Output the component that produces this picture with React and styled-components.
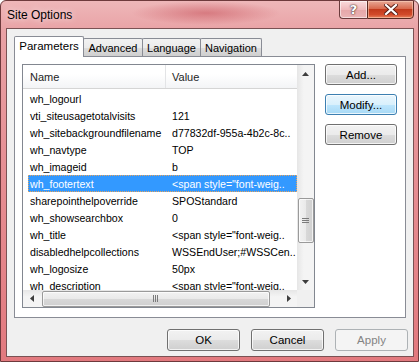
import React from "react";
import styled, { createGlobalStyle } from "styled-components";

const GlobalStyle = createGlobalStyle`
  html, body {
    margin: 0;
    padding: 0;
    background: #ffffff;
  }
  body {
    font-family: "Liberation Sans", Arial, sans-serif;
  }
`;

const rows = [
  ["wh_logourl", ""],
  ["vti_siteusagetotalvisits", "121"],
  ["wh_sitebackgroundfilename", "d77832df-955a-4b2c-8c.."],
  ["wh_navtype", "TOP"],
  ["wh_imageid", "b"],
  ["wh_footertext", '<span style="font-weig..'],
  ["sharepointhelpoverride", "SPOStandard"],
  ["wh_showsearchbox", "0"],
  ["wh_title", '<span style="font-weig..'],
  ["disabledhelpcollections", "WSSEndUser;#WSSCen.."],
  ["wh_logosize", "50px"],
  ["wh_description", '<span style="font-weig..'],
];

const tabs = [
  { label: "Parameters", w: 70 },
  { label: "Advanced", w: 60 },
  { label: "Language", w: 59 },
  { label: "Navigation", w: 62 },
];

function App() {
  return (
    <>
      <GlobalStyle />
      <Window>
        <Glow />
        <TitleBar>
          <Title>Site Options</Title>
          <Caption>
            <HelpButton>?</HelpButton>
            <CloseButton>
              <svg width="14" height="11" viewBox="0 0 14 11">
                <path
                  d="M2 1 L12 10 M12 1 L2 10"
                  stroke="#5a2018"
                  strokeWidth="4"
                  strokeLinecap="square"
                />
                <path
                  d="M2 1 L12 10 M12 1 L2 10"
                  stroke="#ffffff"
                  strokeWidth="2.2"
                  strokeLinecap="square"
                />
              </svg>
            </CloseButton>
          </Caption>
        </TitleBar>
        <Client>
          <TabStrip>
            {tabs.map((t, i) => (
              <Tab key={t.label} $w={t.w} $selected={i === 0}>
                {t.label}
              </Tab>
            ))}
          </TabStrip>
          <Panel>
            <ListView>
              <ListMain>
                <Header>
                  <HeaderCell $w={143}>Name</HeaderCell>
                  <HeaderCell>Value</HeaderCell>
                </Header>
                <Body>
                  {rows.map(([name, value]) => (
                    <Row key={name} $selected={name === "wh_footertext"}>
                      <NameCell>{name}</NameCell>
                      <ValueCell>{value}</ValueCell>
                    </Row>
                  ))}
                </Body>
              </ListMain>
              <VScroll>
                <Arrow>
                  <svg width="7" height="4" viewBox="0 0 7 4">
                    <path d="M0 4 L3.5 0 L7 4 Z" fill="#3d3d3d" />
                  </svg>
                </Arrow>
                <VTrack>
                  <VThumb>
                    <svg width="7" height="6" viewBox="0 0 7 6">
                      <path d="M0 0.5 H7 M0 2.5 H7 M0 4.5 H7" stroke="#7a7a7a" />
                    </svg>
                  </VThumb>
                </VTrack>
                <Arrow>
                  <svg width="7" height="4" viewBox="0 0 7 4">
                    <path d="M0 0 L3.5 4 L7 0 Z" fill="#3d3d3d" />
                  </svg>
                </Arrow>
              </VScroll>
              <HScroll>
                <Arrow>
                  <svg width="4" height="7" viewBox="0 0 4 7">
                    <path d="M4 0 L0 3.5 L4 7 Z" fill="#3d3d3d" />
                  </svg>
                </Arrow>
                <HTrack>
                  <HThumb>
                    <svg width="6" height="7" viewBox="0 0 6 7">
                      <path d="M0.5 0 V7 M2.5 0 V7 M4.5 0 V7" stroke="#7a7a7a" />
                    </svg>
                  </HThumb>
                </HTrack>
                <Arrow>
                  <svg width="4" height="7" viewBox="0 0 4 7">
                    <path d="M0 0 L4 3.5 L0 7 Z" fill="#3d3d3d" />
                  </svg>
                </Arrow>
              </HScroll>
              <Corner />
            </ListView>
            <SideButtons>
              <Button>Add...</Button>
              <Button $focused>Modify...</Button>
              <Button>Remove</Button>
            </SideButtons>
          </Panel>
          <Footer>
            <Button $wide>OK</Button>
            <Button $wide>Cancel</Button>
            <Button $wide disabled>
              Apply
            </Button>
          </Footer>
        </Client>
      </Window>
    </>
  );
}

export default App;

const Window = styled.div`
  position: relative;
  width: 419px;
  height: 362px;
  box-sizing: border-box;
  overflow: hidden;
  display: flex;
  flex-direction: column;
  border: 1px solid #6e3a3c;
  border-radius: 6px 6px 0 0;
  background: linear-gradient(
    180deg,
    #eeb7b9 0px,
    #e9a2a5 30px,
    #e69196 150px,
    #e2797e 362px
  );
`;

const Glow = styled.div`
  position: absolute;
  left: 130px;
  top: 0;
  width: 150px;
  height: 24px;
  background: radial-gradient(
    ellipse at center,
    rgba(190, 60, 70, 0.45) 0%,
    rgba(190, 60, 70, 0) 70%
  );
  pointer-events: none;
`;

const TitleBar = styled.div`
  position: relative;
  height: 27px;
  display: flex;
  align-items: flex-start;
  padding-left: 6px;
`;

const Title = styled.div`
  font-family: "Liberation Sans", Arial, sans-serif;
  font-size: 12px;
  color: #000;
  line-height: 12px;
  margin-top: 8px;
  text-shadow: 0 0 6px rgba(255, 255, 255, 0.9);
`;

const Caption = styled.div`
  margin-left: auto;
  margin-right: 4px;
  margin-top: -1px;
  display: flex;
`;

const HelpButton = styled.div`
  width: 28px;
  height: 19px;
  box-sizing: border-box;
  border: 1px solid #6a3b3c;
  border-right: none;
  border-radius: 0 0 0 4px;
  background: linear-gradient(
    180deg,
    rgba(255, 235, 235, 0.7) 0%,
    rgba(240, 190, 192, 0.6) 50%,
    rgba(225, 160, 162, 0.6) 51%,
    rgba(235, 185, 185, 0.7) 100%
  );
  box-shadow: inset 0 0 0 1px rgba(255, 255, 255, 0.55);
  display: flex;
  align-items: center;
  justify-content: center;
  font-family: "DejaVu Sans", sans-serif;
  font-weight: bold;
  font-size: 13px;
  color: #fff;
  text-shadow: 0 0 2px #3a2020, 0 0 1px #3a2020;
`;

const CloseButton = styled.div`
  width: 47px;
  height: 19px;
  box-sizing: border-box;
  border: 1px solid #5a2a22;
  border-radius: 0 0 4px 0;
  background: linear-gradient(
    180deg,
    #e8a896 0%,
    #d86a4e 45%,
    #c23a1c 50%,
    #d24a2a 80%,
    #e8825e 100%
  );
  box-shadow: inset 0 0 0 1px rgba(255, 220, 200, 0.5);
  display: flex;
  align-items: center;
  justify-content: center;
`;

const Client = styled.div`
  position: relative;
  margin: 0 4px 0 5px;
  height: 329px;
  box-sizing: border-box;
  border: 1px solid #7a5254;
  background: #f0f0f0;
  display: flex;
  flex-direction: column;
  padding: 7px 7px 0 7px;
  font-family: "Liberation Sans", Arial, sans-serif;
  font-size: 11px;
  color: #000;
`;

const TabStrip = styled.div`
  position: relative;
  z-index: 1;
  display: flex;
  align-items: flex-end;
  height: 20px;
`;

const Tab = styled.div`
  box-sizing: border-box;
  width: ${(p) => p.$w}px;
  height: ${(p) => (p.$selected ? 21 : 18)}px;
  margin-bottom: ${(p) => (p.$selected ? -1 : 0)}px;
  margin-left: ${(p) => (p.$selected ? 0 : -1)}px;
  border: 1px solid #898c95;
  border-bottom: none;
  border-radius: 2px 2px 0 0;
  background: ${(p) =>
    p.$selected
      ? "#ffffff"
      : "linear-gradient(180deg, #f2f2f2 0%, #ebebeb 50%, #dddddd 51%, #cfcfcf 100%)"};
  display: flex;
  align-items: center;
  justify-content: center;
  padding-bottom: ${(p) => (p.$selected ? 3 : 0)}px;
  font-size: ${(p) => (p.$selected ? 11.5 : 11)}px;
  white-space: nowrap;
`;

const Panel = styled.div`
  box-sizing: border-box;
  width: 392px;
  height: 262px;
  border: 1px solid #898c95;
  background: #ffffff;
  display: flex;
  align-items: flex-start;
  padding: 7px 0 0 7px;
`;

const ListView = styled.div`
  box-sizing: border-box;
  width: 293px;
  height: 244px;
  border: 1px solid #828790;
  background: #ffffff;
  display: grid;
  grid-template-columns: 274px 17px;
  grid-template-rows: 225px 17px;
  font-size: 10.6px;
`;

const ListMain = styled.div`
  overflow: hidden;
  display: flex;
  flex-direction: column;
`;

const Header = styled.div`
  flex: none;
  height: 23px;
  display: flex;
  border-bottom: 1px solid #d5d5d5;
  background: linear-gradient(180deg, #ffffff 0%, #ffffff 40%, #f3f4f6 100%);
`;

const HeaderCell = styled.div`
  box-sizing: border-box;
  ${(p) => (p.$w ? `width: ${p.$w}px; border-right: 1px solid #e3e4e6;` : "flex: 1;")}
  padding-left: ${(p) => (p.$w ? 7 : 6)}px;
  display: flex;
  align-items: center;
  color: #1e1e1e;
  font-size: 11px;
`;

const Body = styled.div`
  padding-top: 1px;
  padding-left: 5px;
`;

const Row = styled.div`
  box-sizing: border-box;
  height: 17px;
  display: grid;
  grid-template-columns: 138px 1fr;
  align-items: center;
  white-space: nowrap;
  background: ${(p) => (p.$selected ? "#3399ff" : "transparent")};
  color: ${(p) => (p.$selected ? "#ffffff" : "#000000")};
  outline: ${(p) => (p.$selected ? "1px dotted #e9a45a" : "none")};
  outline-offset: -1px;
`;

const NameCell = styled.div`
  padding-left: 2px;
  overflow: hidden;
`;

const ValueCell = styled.div`
  padding-left: 6px;
  overflow: hidden;
`;

const VScroll = styled.div`
  display: flex;
  flex-direction: column;
  background: linear-gradient(90deg, #e6e6e6 0%, #f4f4f4 40%, #f4f4f4 100%);
`;

const HScroll = styled.div`
  display: flex;
  background: linear-gradient(180deg, #e6e6e6 0%, #f4f4f4 40%, #f4f4f4 100%);
`;

const Arrow = styled.div`
  flex: none;
  width: 17px;
  height: 17px;
  display: flex;
  align-items: center;
  justify-content: center;
`;

const VTrack = styled.div`
  flex: 1;
  display: flex;
  flex-direction: column;
  padding-top: 116px;
  padding-bottom: 30px;
  align-items: center;
`;

const VThumb = styled.div`
  box-sizing: border-box;
  width: 16px;
  flex: 1;
  border: 1px solid #9a9a9a;
  border-radius: 2px;
  background: linear-gradient(90deg, #f2f2f2 0%, #e9e9e9 50%, #d8d8d8 51%, #d0d0d0 100%);
  box-shadow: inset 0 0 0 1px rgba(255, 255, 255, 0.7);
  display: flex;
  align-items: center;
  justify-content: center;
`;

const HTrack = styled.div`
  flex: 1;
  display: flex;
  padding-left: 2px;
  padding-right: 10px;
  align-items: center;
`;

const HThumb = styled.div`
  box-sizing: border-box;
  height: 16px;
  flex: 1;
  border: 1px solid #9a9a9a;
  border-radius: 2px;
  background: linear-gradient(180deg, #f2f2f2 0%, #e9e9e9 50%, #d8d8d8 51%, #d0d0d0 100%);
  box-shadow: inset 0 0 0 1px rgba(255, 255, 255, 0.7);
  display: flex;
  align-items: center;
  justify-content: center;
`;

const Corner = styled.div`
  background: #f0f0f0;
`;

const SideButtons = styled.div`
  margin-left: 10px;
  display: flex;
  flex-direction: column;
  gap: 9px;
`;

const Button = styled.button`
  box-sizing: border-box;
  width: ${(p) => (p.$wide ? 73 : 72)}px;
  height: ${(p) => (p.$wide ? 22 : 21)}px;
  padding: 0;
  margin: 0;
  font-family: "Liberation Sans", Arial, sans-serif;
  font-size: 11.5px;
  color: #000;
  border-radius: 3px;
  border: 1px solid ${(p) => (p.$focused ? "#3c7fb1" : "#707070")};
  background: ${(p) =>
    p.$focused
      ? "linear-gradient(180deg, #eaf6fd 0%, #d9f0fc 50%, #bee6fd 51%, #a7d9f5 100%)"
      : "linear-gradient(180deg, #f2f2f2 0%, #ebebeb 50%, #dddddd 51%, #cfcfcf 100%)"};
  box-shadow: inset 0 0 0 1px rgba(255, 255, 255, 0.75);
  &:disabled {
    border-color: #adb2b5;
    background: #f4f4f4;
    color: #838383;
    box-shadow: none;
  }
`;

const Footer = styled.div`
  display: flex;
  justify-content: flex-end;
  gap: 11px;
  margin-top: 11px;
  margin-right: -2px;
`;
